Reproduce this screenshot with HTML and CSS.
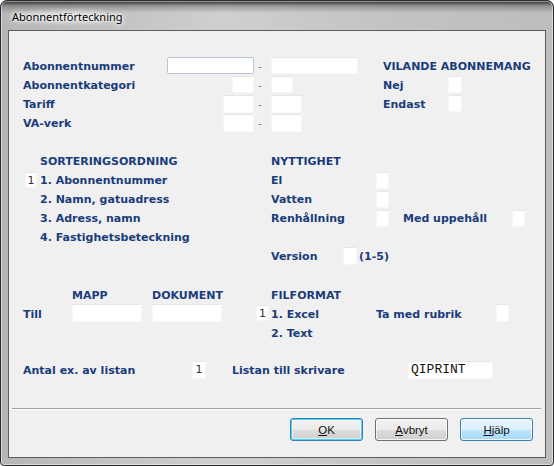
FILE: index.html
```html
<!DOCTYPE html>
<html lang="sv">
<head>
<meta charset="utf-8">
<title>Abonnentförteckning</title>
<link rel="stylesheet" href="styles.css">
</head>
<body>
<div class="window">
  <div class="titlebar"><span class="title">Abonnentförteckning</span></div>
  <div class="client">
    <div class="grid g1">
      <span class="lbl">Abonnentnummer</span>
      <span class="fld fa w87 active"></span>
      <span class="dash">-</span>
      <span class="fld w87"></span>
      <span class="lbl c5">VILANDE ABONNEMANG</span>

      <span class="lbl">Abonnentkategori</span>
      <span class="fld fa w22"></span>
      <span class="dash">-</span>
      <span class="fld w22"></span>
      <span class="lbl">Nej</span>
      <span class="fld w14"></span>

      <span class="lbl">Tariff</span>
      <span class="fld fa w31"></span>
      <span class="dash">-</span>
      <span class="fld w31"></span>
      <span class="lbl">Endast</span>
      <span class="fld w14"></span>

      <span class="lbl">VA-verk</span>
      <span class="fld fa w31"></span>
      <span class="dash">-</span>
      <span class="fld w31"></span>
    </div>

    <div class="sec2">
      <div class="grid g2l">
        <span class="lbl c2">SORTERINGSORDNING</span>
        <span class="fld num sortbox">1</span><span class="lbl">1. Abonnentnummer</span>
        <span class="lbl c2">2. Namn, gatuadress</span>
        <span class="lbl c2">3. Adress, namn</span>
        <span class="lbl c2">4. Fastighetsbeteckning</span>
      </div>
      <div class="grid g2r">
        <span class="lbl full">NYTTIGHET</span>
        <span class="lbl c1">El</span><span class="fld chk"></span>
        <span class="lbl c1">Vatten</span><span class="fld chk"></span>
        <span class="lbl c1">Renhållning</span><span class="fld chk"></span><span class="lbl">Med uppehåll</span><span class="fld chk"></span>
        <div class="version full">
          <span class="lbl vlabel">Version</span><span class="fld vbox"></span><span class="lbl">(1-5)</span>
        </div>
      </div>
    </div>

    <div class="grid g3">
      <span class="lbl col2">MAPP</span>
      <span class="lbl col3">DOKUMENT</span>
      <span class="lbl c5">FILFORMAT</span>

      <span class="lbl">Till</span>
      <span class="fld w70 tall"></span>
      <span class="fld w70 tall"></span>
      <span class="fld num fmtbox">1</span>
      <span class="lbl">1. Excel</span>
      <span class="lbl">Ta med rubrik</span>
      <span class="fld chk tall"></span>

      <span class="lbl c5">2. Text</span>
    </div>

    <div class="grid g4">
      <span class="lbl">Antal ex. av listan</span>
      <span class="fld num antal">1</span>
      <span class="lbl">Listan till skrivare</span>
      <span class="fld printer">QIPRINT</span>
    </div>

    <div class="separator"></div>

    <div class="buttons">
      <span class="btn btn-default"><u>O</u>K</span>
      <span class="btn"><u>A</u>vbryt</span>
      <span class="btn btn-hover"><u>H</u>jälp</span>
    </div>
  </div>
</div>
</body>
</html>
```

FILE: styles.css
```css
* { box-sizing: border-box; margin: 0; padding: 0; }
html, body { width: 554px; height: 466px; overflow: hidden; }
body { background: #ffffff; font-family: "DejaVu Sans", Verdana, sans-serif; }

.window {
  width: 554px;
  height: 466px;
  border: 1px solid #2c2c2c;
  border-radius: 7px 7px 4px 4px;
  background:
    linear-gradient(180deg, rgba(20,20,20,0.85) 0px, rgba(60,60,60,0.35) 5px, rgba(0,0,0,0) 12px),
    linear-gradient(90deg, #b6b6b6 0px, #cfcfcf 40%, #c3c3c3 70%, #bdbdbd 100%);
  display: flex;
  flex-direction: column;
  padding: 0 7px 7px;
  box-shadow: inset 0 0 0 1px rgba(255,255,255,0.45);
}

.titlebar {
  height: 29px;
  flex: none;
  display: flex;
  align-items: center;
  padding-left: 4px;
  padding-top: 1px;
}
.title {
  font-family: "Noto Sans", "Open Sans", sans-serif;
  font-size: 11px;
  color: #000;
  text-shadow: 0 0 8px #fff, 0 0 5px #fff, 0 0 3px #fff;
  background: radial-gradient(ellipse at center, rgba(255,255,255,0.55) 0%, rgba(255,255,255,0) 70%);
  padding: 2px 4px;
  margin-left: -4px;
}

.client {
  flex: 1;
  border: 1px solid #5e5e5e;
  background: #f0f0f0;
  display: flex;
  flex-direction: column;
  padding: 26px 0 0 14px;
}

.grid {
  display: grid;
  grid-auto-rows: 19px;
  align-items: start;
}

.lbl {
  font-weight: bold;
  font-size: 11px;
  line-height: 19px;
  color: #1a3c7a;
  white-space: nowrap;
}

.fld {
  display: block;
  height: 18px;
  background: #ffffff;
  border: 1px solid #f6f6f6;
  border-top-color: #e6e6e6;
}
.fld.active { border: 1px solid #b9c6d6; border-radius: 2px; }

.num {
  font-size: 11px;
  line-height: 15px;
  color: #333;
  text-align: center;
}

.dash {
  font-size: 11px;
  line-height: 19px;
  color: #6f86b0;
  padding-left: 4px;
}

/* section 1 */
.g1 { grid-template-columns: 144px 87px 17px 112px 65px 1fr; }
.g1 .fa { justify-self: end; }
.w87 { width: 87px; height: 17px; }
.w22 { width: 22px; height: 17px; }
.w31 { width: 31px; }
.w14 { width: 14px; height: 17px; }
.c5 { grid-column: 5 / -1; }
.c2 { grid-column: 2 / -1; }
.c1 { grid-column: 1; }
.col2 { grid-column: 2; }
.col3 { grid-column: 3; }
.full { grid-column: 1 / -1; }

/* section 2 */
.sec2 { display: flex; margin-top: 19px; }
.g2l { width: 248px; grid-template-columns: 17px 1fr; }
.sortbox { width: 12px; height: 16px; margin: 1px 0 0 2px; }
.g2r { grid-template-columns: 105px 27px 109px 1fr; }
.chk { width: 13px; height: 17px; margin-top: 1px; }
.version { grid-row: 6; display: flex; align-items: flex-start; }
.vlabel { width: 72px; }
.vbox { width: 14px; margin-right: 2px; }

/* section 3 */
.g3 { margin-top: 20px; grid-template-columns: 49px 80px 104px 15px 105px 120px 1fr; }
.w70 { width: 70px; }
.tall { height: 18px; margin-top: -1px; }
.fmtbox { width: 13px; height: 16px; }

/* section 4 */
.g4 { margin-top: 18px; grid-template-columns: 169px 40px 176px 1fr; }
.antal { width: 14px; height: 18px; line-height: 16px; }
.printer {
  width: 85px;
  height: 18px;
  font-family: "Liberation Mono", "Courier New", monospace;
  font-size: 13px;
  line-height: 16px;
  color: #111;
  padding-left: 2px;
}

.separator {
  margin: 28px 4px 0 -11px;
  height: 2px;
  border-top: 1px solid #a0a0a0;
  border-bottom: 1px solid #ffffff;
}

.buttons {
  display: flex;
  justify-content: flex-end;
  gap: 12px;
  margin-top: 8px;
  padding-right: 12px;
}
.btn {
  width: 73px;
  height: 23px;
  display: flex;
  align-items: center;
  justify-content: center;
  border: 1px solid #707070;
  border-radius: 3px;
  background: linear-gradient(180deg, #f2f2f2 0%, #ebebeb 50%, #dddddd 51%, #cfcfcf 100%);
  box-shadow: inset 0 0 0 1px rgba(255,255,255,0.75);
  font-family: "Liberation Sans", Arial, sans-serif;
  font-size: 11.5px;
  color: #111;
}
.btn u { text-decoration: underline; text-underline-offset: 1px; }
.btn-default {
  border-color: #3c7fb1;
  box-shadow: inset 0 0 0 1px #48d2f8, inset 0 0 0 2px rgba(255,255,255,0.5);
}
.btn-hover {
  border-color: #3c7fb1;
  background: linear-gradient(180deg, #eaf6fd 0%, #d9f0fc 50%, #bee6fd 51%, #a7d9f5 100%);
}
```
